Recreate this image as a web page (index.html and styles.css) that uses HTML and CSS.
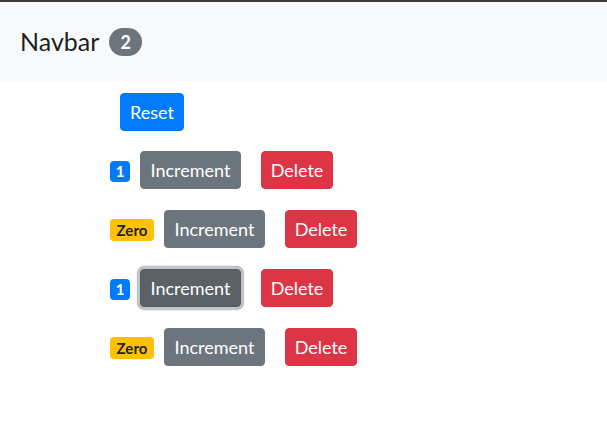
FILE: index.html
```html
<!DOCTYPE html>
<html>
<head>
<meta charset="utf-8">
<link rel="stylesheet" href="styles.css">
</head>
<body>
<div class="topline"></div>
<nav class="navbar">
  <span class="brand">Navbar</span>
  <span class="pill">2</span>
</nav>
<main class="main">
  <div class="row">
    <button class="btn btn-primary btn-reset">Reset</button>
  </div>
  <div class="row">
    <span class="badge badge-primary">1</span>
    <button class="btn btn-secondary btn-inc">Increment</button>
    <button class="btn btn-danger btn-del">Delete</button>
  </div>
  <div class="row">
    <span class="badge badge-warning">Zero</span>
    <button class="btn btn-secondary btn-inc">Increment</button>
    <button class="btn btn-danger btn-del">Delete</button>
  </div>
  <div class="row">
    <span class="badge badge-primary">1</span>
    <button class="btn btn-secondary btn-inc focus">Increment</button>
    <button class="btn btn-danger btn-del">Delete</button>
  </div>
  <div class="row">
    <span class="badge badge-warning">Zero</span>
    <button class="btn btn-secondary btn-inc">Increment</button>
    <button class="btn btn-danger btn-del">Delete</button>
  </div>
</main>
</body>
</html>
```
FILE: styles.css
```css
html, body {
  margin: 0;
  padding: 0;
  background: #fff;
  font-family: Lato, "Noto Sans", sans-serif;
  color: #212529;
}
.topline {
  height: 2px;
  background: #3c3c3c;
}
.navbar {
  height: 80px;
  background: #f8f9fa;
  display: flex;
  align-items: center;
  padding: 0 20px;
  gap: 10px;
}
.brand {
  font-size: 25px;
  color: rgba(0,0,0,.9);
  line-height: 30px;
  position: relative;
  top: -1px;
}
.pill {
  display: inline-flex;
  align-items: center;
  justify-content: center;
  width: 33px;
  height: 28px;
  box-sizing: border-box;
  border-radius: 14px;
  background: #6c757d;
  color: #fff;
  font-weight: 700;
  font-size: 18px;
  line-height: 1;
}
.main {
  padding: 11px 0 0 110px;
  display: flex;
  flex-direction: column;
  gap: 21px;
}
.row {
  display: flex;
  align-items: center;
  height: 38px;
}
.row:first-child {
  margin-bottom: -1px;
}
.btn {
  height: 38px;
  box-sizing: border-box;
  border: 1px solid transparent;
  border-radius: 4px;
  font-family: inherit;
  font-size: 18px;
  line-height: 24px;
  padding: 0;
  color: #fff;
  text-align: center;
}
.btn-reset {
  width: 64px;
  margin-left: 10px;
  background: #007bff;
  border-color: #007bff;
}
.btn-inc {
  width: 101px;
  margin-left: 10px;
  background: #6c757d;
  border-color: #6c757d;
}
.btn-inc.focus {
  background: #5a6268;
  border-color: #545b62;
  box-shadow: 0 0 0 3.2px rgba(130,138,145,.5);
}
.btn-del {
  width: 72px;
  margin-left: 20px;
  background: #dc3545;
  border-color: #dc3545;
}
.badge {
  display: inline-block;
  box-sizing: border-box;
  height: 21px;
  font-size: 15px;
  font-weight: 700;
  line-height: 21px;
  padding: 0;
  border-radius: 4px;
  text-align: center;
  position: relative;
  top: 1px;
}
.badge-primary {
  background: #007bff;
  color: #fff;
  width: 20px;
}
.badge-warning {
  background: #ffc107;
  color: #212529;
  width: 44px;
  height: 22px;
  line-height: 22px;
}
```
